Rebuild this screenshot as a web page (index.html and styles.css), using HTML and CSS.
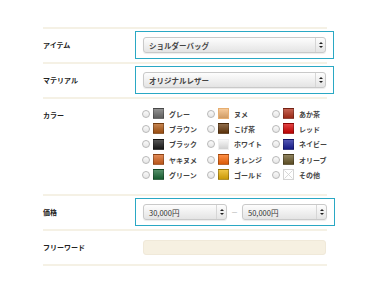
FILE: index.html
```html
<!DOCTYPE html>
<html lang="ja">
<head>
    <meta charset="UTF-8">
    <title>検索</title>
    <link rel="stylesheet" href="styles.css">
</head>
<body>
    <div class="search-form">
        <div class="row">
            <div class="label">アイテム</div>
            <div class="field">
                <div class="focus-box">
                    <div class="select"><span class="value bold">ショルダーバッグ</span><span class="arrows"></span></div>
                </div>
            </div>
        </div>

        <div class="row">
            <div class="label">マテリアル</div>
            <div class="field">
                <div class="focus-box">
                    <div class="select"><span class="value bold">オリジナルレザー</span><span class="arrows"></span></div>
                </div>
            </div>
        </div>

        <div class="row row-colors">
            <div class="label">カラー</div>
            <div class="field">
                <div class="colors">
                    <label class="color"><span class="radio"></span><span class="swatch gray"></span>グレー</label>
                    <label class="color"><span class="radio"></span><span class="swatch nume"></span>ヌメ</label>
                    <label class="color"><span class="radio"></span><span class="swatch akacha"></span>あか茶</label>
                    <label class="color"><span class="radio"></span><span class="swatch brown"></span>ブラウン</label>
                    <label class="color"><span class="radio"></span><span class="swatch kogecha"></span>こげ茶</label>
                    <label class="color"><span class="radio"></span><span class="swatch red"></span>レッド</label>
                    <label class="color"><span class="radio"></span><span class="swatch black"></span>ブラック</label>
                    <label class="color"><span class="radio"></span><span class="swatch white"></span>ホワイト</label>
                    <label class="color"><span class="radio"></span><span class="swatch navy"></span>ネイビー</label>
                    <label class="color"><span class="radio"></span><span class="swatch yakinume"></span>ヤキヌメ</label>
                    <label class="color"><span class="radio"></span><span class="swatch orange"></span>オレンジ</label>
                    <label class="color"><span class="radio"></span><span class="swatch olive"></span>オリーブ</label>
                    <label class="color"><span class="radio"></span><span class="swatch green"></span>グリーン</label>
                    <label class="color"><span class="radio"></span><span class="swatch gold"></span>ゴールド</label>
                    <label class="color"><span class="radio"></span><span class="swatch other">
                        <svg width="11" height="11" viewBox="0 0 11 11"><path d="M1.5 1.5 L9.5 9.5 M9.5 1.5 L1.5 9.5" stroke="#d0d0d0" stroke-width="0.8" fill="none"/></svg>
                    </span>その他</label>
                </div>
            </div>
        </div>

        <div class="row">
            <div class="label">価格</div>
            <div class="field">
                <div class="focus-box price">
                    <div class="select"><span class="value">30,000円</span><span class="arrows"></span></div>
                    <span class="dash">－</span>
                    <div class="select"><span class="value">50,000円</span><span class="arrows"></span></div>
                </div>
            </div>
        </div>

        <div class="row">
            <div class="label">フリーワード</div>
            <div class="field">
                <div class="text-input"></div>
            </div>
        </div>
    </div>
</body>
</html>
```

FILE: styles.css
```css
* {
    margin: 0;
    padding: 0;
    box-sizing: border-box;
}

body {
    font-family: "Noto Sans CJK JP", "Liberation Sans", sans-serif;
    background: #fff;
    color: #333;
}

.search-form {
    width: 284px;
    margin: 27px 0 0 43px;
    border-bottom: 2px solid #f5f1e5;
}

.row {
    display: flex;
    align-items: center;
    border-top: 2px solid #f5f1e5;
    padding: 2px 0 3px;
    min-height: 35px;
}

.label {
    width: 100px;
    flex-shrink: 0;
    font-size: 7px;
    font-weight: bold;
    color: #222;
}

.field {
    flex: 1;
}

.focus-box {
    display: flex;
    align-items: center;
    margin: 0 -7px 0 -8px;
    padding: 5px 7px 5px 7px;
    border: 1px solid #2aa8c4;
}

.select {
    flex: 1;
    height: 16px;
    display: flex;
    align-items: center;
    border: 1px solid #c9c9c9;
    border-radius: 3px;
    background: linear-gradient(#fdfdfd, #e4e4e4);
    box-shadow: 0 1px 1px rgba(0,0,0,0.08);
}

.value {
    flex: 1;
    padding-left: 5px;
    font-size: 7.5px;
    color: #333;
    white-space: nowrap;
}

.value.bold {
    font-weight: bold;
    color: #444;
}

.arrows {
    position: relative;
    width: 10px;
    height: 100%;
    border-left: 1px solid #d6d6d6;
}

.arrows::before,
.arrows::after {
    content: "";
    position: absolute;
    left: 3px;
    border-left: 2px solid transparent;
    border-right: 2px solid transparent;
}

.arrows::before {
    top: 4px;
    border-bottom: 2px solid #222;
}

.arrows::after {
    top: 8px;
    border-top: 2px solid #222;
}

.price .select:first-child {
    flex: 0 0 84px;
}

.price .select:last-child {
    flex: 0 0 85px;
}

.dash {
    width: 15px;
    text-align: center;
    font-size: 7px;
    color: #aaa;
}

.row-colors {
    align-items: flex-start;
    padding: 7px 0 12px;
}

.row-colors .label {
    padding-top: 4px;
}

.colors {
    display: grid;
    grid-template-columns: 65px 65px 65px;
    grid-auto-rows: 15.3px;
    margin-left: -1px;
}

.color {
    display: flex;
    align-items: center;
    font-size: 7px;
    font-weight: bold;
    color: #444;
}

.radio {
    width: 8px;
    height: 8px;
    border: 1px solid #b8b8b8;
    border-radius: 50%;
    background: linear-gradient(#fafafa, #e6e6e6);
    margin-right: 3px;
}

.swatch {
    width: 11px;
    height: 11px;
    margin-right: 5px;
    border: 1px solid rgba(0,0,0,0.25);
    background-image: linear-gradient(rgba(255,255,255,0.25), rgba(0,0,0,0.15));
}

.swatch svg {
    display: block;
    margin: -1px;
}

.gray { background-color: #6e6e6e; }
.nume { background-color: #f3b776; border-color: #e6ae70; }
.akacha { background-color: #b3301a; }
.brown { background-color: #b25a14; }
.kogecha { background-color: #6a3a0c; }
.red { background-color: #d80404; }
.black { background-color: #1c1c1c; }
.white { background-color: #f4f4f4; border-color: #eee; }
.navy { background-color: #1a1f9c; }
.yakinume { background-color: #d8641e; }
.orange { background-color: #ff6a08; }
.olive { background-color: #6b5a2a; }
.green { background-color: #1c6b38; }
.gold { background-color: #ebb308; }

.other {
    background: #fff;
    border-color: #d4d4d4;
}

.text-input {
    height: 15px;
    margin-right: 1px;
    background: #f6f0e1;
    border: 1px solid #f0e9d9;
    border-radius: 3px;
}
```
